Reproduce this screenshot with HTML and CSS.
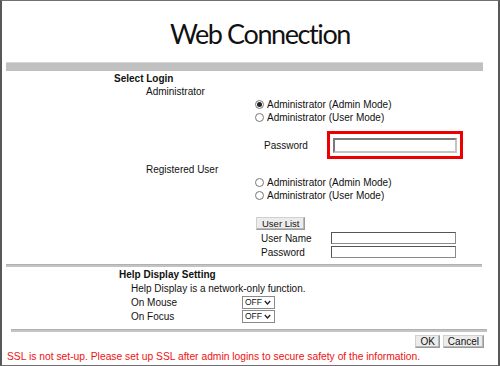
FILE: index.html
```html
<!DOCTYPE html>
<html lang="en">
<head>
  <meta charset="UTF-8" />
  <title>Web Connection</title>
  <link rel="stylesheet" href="styles.css">
</head>
<body>
  <div class="frame">
    <h1 class="title">Web Connection</h1>
    <div class="bar"></div>

    <!-- Select Login -->
    <div class="section-title login-title">Select Login</div>
    <div class="group-label">Administrator</div>
    <div class="radio-list">
      <label class="radio-row"><span class="radio checked"></span>Administrator (Admin Mode)</label>
      <label class="radio-row"><span class="radio"></span>Administrator (User Mode)</label>
    </div>
    <div class="pass-row">
      <span class="pass-label">Password</span>
      <div class="highlight"><div class="field big"></div></div>
    </div>

    <div class="group-label registered">Registered User</div>
    <div class="radio-list">
      <label class="radio-row"><span class="radio"></span>Administrator (Admin Mode)</label>
      <label class="radio-row"><span class="radio"></span>Administrator (User Mode)</label>
    </div>
    <div class="userlist-row"><span class="btn">User List</span></div>
    <div class="field-row first">
      <span class="field-label">User Name</span>
      <div class="field"></div>
    </div>
    <div class="field-row">
      <span class="field-label">Password</span>
      <div class="field"></div>
    </div>

    <div class="rule"></div>

    <!-- Help Display Setting -->
    <div class="section-title help-title">Help Display Setting</div>
    <div class="help-text">Help Display is a network-only function.</div>
    <div class="help-row">
      <span class="help-label">On Mouse</span>
      <span class="select">OFF<svg width="7" height="5" viewBox="0 0 7 5"><path d="M0.8 1 L3.5 4 L6.2 1" fill="none" stroke="#222" stroke-width="1.3"/></svg></span>
    </div>
    <div class="help-row">
      <span class="help-label">On Focus</span>
      <span class="select">OFF<svg width="7" height="5" viewBox="0 0 7 5"><path d="M0.8 1 L3.5 4 L6.2 1" fill="none" stroke="#222" stroke-width="1.3"/></svg></span>
    </div>

    <div class="rule short"></div>

    <div class="actions">
      <span class="btn ok">OK</span>
      <span class="btn">Cancel</span>
    </div>
    <div class="warning">SSL is not set-up. Please set up SSL after admin logins to secure safety of the information.</div>
  </div>
</body>
</html>
```

FILE: styles.css
```css
body {
  margin: 0;
  background: #ffffff;
  font-family: 'Liberation Sans', Arial, sans-serif;
  font-size: 10px;
  color: #111111;
}

.frame {
  width: 500px;
  height: 366px;
  box-sizing: border-box;
  border-left: 2px solid #585858;
  border-right: 2px solid #585858;
  border-top: 1px solid #707070;
  border-bottom: 1px solid #707070;
  overflow: hidden;
}

.title {
  margin: 0;
  height: 61px;
  box-sizing: border-box;
  padding: 15px 0 0 20px;
  text-align: center;
  font-family: Lato, 'DejaVu Sans', sans-serif;
  font-weight: 400;
  font-size: 27px;
  letter-spacing: -1.4px;
  line-height: 36px;
  color: #111111;
}

.bar {
  height: 9px;
  margin: 0 15px 0 4px;
  background: #c0c0c0;
  border-top: 1px solid #d8d8d8;
  box-sizing: border-box;
}

.section-title {
  font-weight: bold;
  line-height: 13px;
  height: 13px;
}

.login-title {
  margin-top: 1px;
  padding-left: 112px;
}

.group-label {
  padding-left: 144px;
  line-height: 13px;
  height: 13px;
}

.group-label.registered {
  margin-top: 4px;
}

.radio-list {
  padding-left: 253px;
}

.radio-row {
  display: flex;
  align-items: center;
  height: 13px;
  line-height: 13px;
}

.radio {
  width: 9px;
  height: 9px;
  box-sizing: border-box;
  border: 1px solid #777777;
  border-radius: 50%;
  margin-right: 3px;
  display: flex;
  align-items: center;
  justify-content: center;
  background: #ffffff;
}

.radio.checked::after {
  content: "";
  width: 5px;
  height: 5px;
  border-radius: 50%;
  background: #222222;
}

.pass-row {
  display: flex;
  align-items: center;
  margin-top: 7px;
  height: 28px;
  padding-left: 262px;
}

.pass-label {
  width: 63px;
}

.highlight {
  width: 136px;
  height: 28px;
  box-sizing: border-box;
  border: 3px solid #ee0000;
  display: flex;
  align-items: center;
  justify-content: center;
}

.field {
  width: 125px;
  height: 12px;
  box-sizing: border-box;
  border: 1px solid #8a8a8a;
  border-top-color: #555555;
  border-left-color: #555555;
  background: #ffffff;
}

.field.big {
  width: 124px;
  height: 15px;
  border-width: 2px;
  border-color: #7a7a7a #c4c4c4 #c4c4c4 #7a7a7a;
}

.userlist-row {
  margin-top: 15px;
  height: 13px;
  padding-left: 254px;
  display: flex;
}

.btn {
  display: inline-flex;
  align-items: center;
  justify-content: center;
  height: 13px;
  box-sizing: border-box;
  padding: 0 5px;
  font-size: 9.5px;
  background: #ececec;
  border: 1px solid #9a9a9a;
  border-top-color: #d0d0d0;
  border-left-color: #d0d0d0;
  box-shadow: inset -1px -1px 0 #b8b8b8;
  color: #111111;
}

.field-row {
  display: flex;
  align-items: center;
  height: 14px;
  padding-left: 259px;
}

.field-row.first {
  margin-top: 1px;
}

.field-label {
  width: 70px;
}

.rule {
  height: 3px;
  margin: 5px 16px 0 4px;
  background: #c4c4c4;
  border-top: 1px solid #b0b0b0;
  box-sizing: border-box;
}

.rule.short {
  margin: 6px 11px 0 9px;
}

.help-title {
  margin-top: 1px;
  padding-left: 117px;
}

.help-text {
  margin-top: 1px;
  padding-left: 129px;
  line-height: 13px;
  height: 13px;
}

.help-row {
  display: flex;
  align-items: center;
  height: 14px;
  padding-left: 129px;
}

.help-label {
  width: 111px;
}

.select {
  display: inline-flex;
  align-items: center;
  justify-content: space-between;
  width: 33px;
  height: 13px;
  box-sizing: border-box;
  padding: 0 3px 0 2px;
  border: 1px solid #8a8a8a;
  font-size: 8.5px;
  background: #ffffff;
}

.actions {
  display: flex;
  justify-content: flex-end;
  gap: 3px;
  margin: 3px 14px 0 0;
}

.actions .btn {
  padding: 0 4px;
  font-size: 10px;
}

.actions .btn.ok {
  min-width: 24px;
}

.warning {
  margin-top: 2px;
  padding-left: 5px;
  line-height: 13px;
  font-size: 10.3px;
  color: #ee1111;
}
```
